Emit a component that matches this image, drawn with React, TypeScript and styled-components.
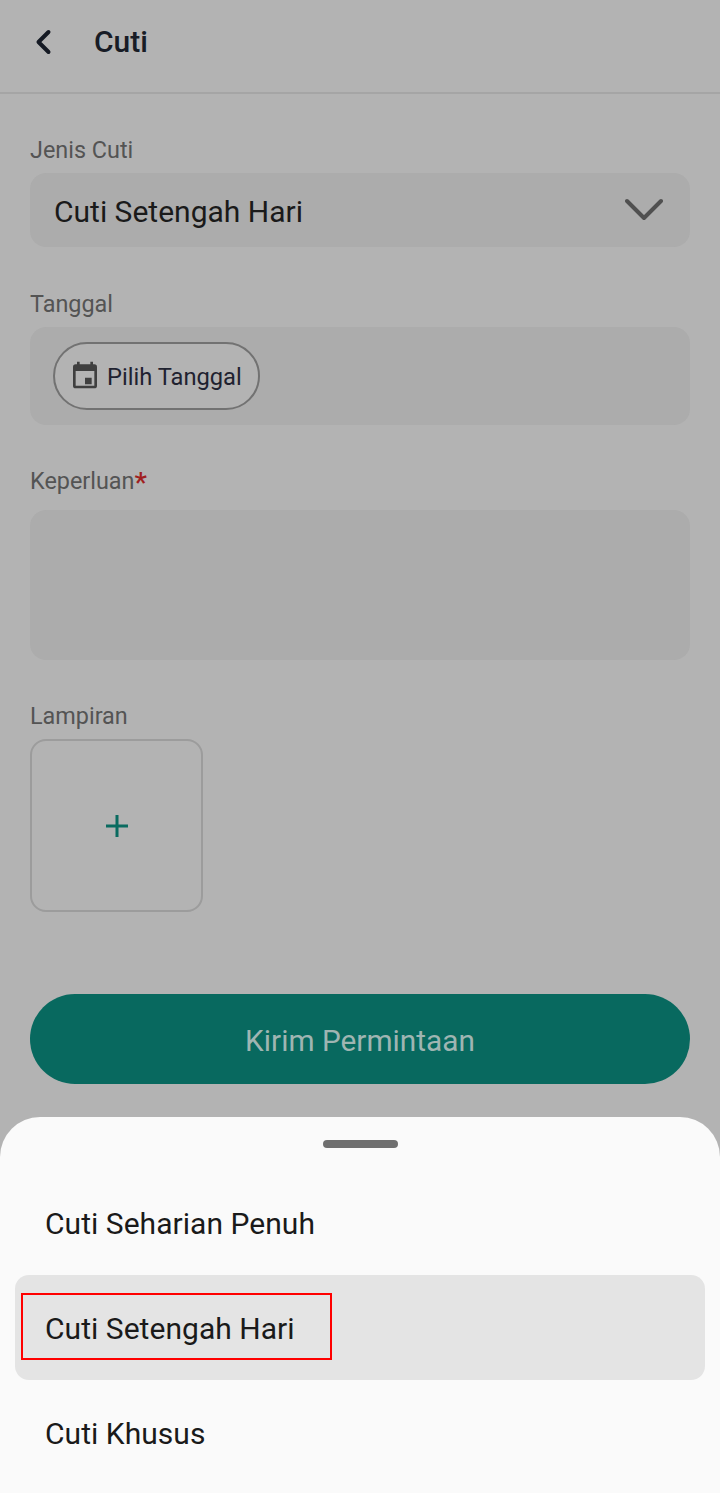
import React from "react";
import styled, { createGlobalStyle } from "styled-components";

const Global = createGlobalStyle`
  html, body { margin: 0; padding: 0; background: #b3b3b3; }
  * { box-sizing: border-box; }
  #root { width: 720px; height: 1493px; font-family: Roboto, "Liberation Sans", sans-serif; }
`;

const Page = styled.div`
  width: 720px;
  height: 1493px;
  display: flex;
  flex-direction: column;
  background: #b3b3b3;
  overflow: hidden;
`;

const Header = styled.header`
  height: 94px;
  flex: none;
  display: flex;
  align-items: center;
  gap: 30px;
  padding: 0 0 8px 30px;
  border-bottom: 2px solid #a5a5a5;
`;

const BackIcon = styled.svg`
  width: 34px;
  height: 34px;
  flex: none;
  color: #151a24;
`;

const Title = styled.h1`
  margin: 0;
  font-size: 30px;
  line-height: 36px;
  font-weight: 500;
  color: #181c26;
`;

const Form = styled.main`
  display: flex;
  flex-direction: column;
  padding: 40px 30px 0;
`;

const Group = styled.section<{ $after: number; $gap?: number }>`
  display: flex;
  flex-direction: column;
  gap: ${(p) => p.$gap ?? 7}px;
  margin-bottom: ${(p) => p.$after}px;
`;

const Label = styled.label`
  font-size: 23.4px;
  line-height: 32px;
  color: #545454;
`;

const Required = styled.span`
  color: #a02020;
  font-size: 28px;
  font-weight: 500;
  line-height: 0;
  position: relative;
  top: 3px;
`;

const SelectField = styled.div`
  height: 74px;
  border-radius: 16px;
  background: #acacac;
  display: flex;
  align-items: center;
  justify-content: space-between;
  padding: 0 27px 0 24px;
  font-size: 30px;
  color: #1a1a1a;
`;

const SelectText = styled.span`
  margin-top: 2px;
`;

const DateField = styled.div`
  height: 98px;
  border-radius: 16px;
  background: #acacac;
  display: flex;
  align-items: center;
  padding: 0 23px;
`;

const DateChip = styled.div`
  width: 207px;
  height: 68px;
  border-radius: 34px;
  border: 2px solid #727272;
  background: #b3b3b3;
  display: flex;
  align-items: center;
  gap: 6px;
  padding-left: 14px;
  font-size: 23.7px;
  color: #1f2230;
`;

const ChipText = styled.span`
  margin-top: 2px;
`;

const CalendarIcon = styled.svg`
  width: 32px;
  height: 32px;
  flex: none;
  margin-top: -2px;
  color: #3f3f3f;
`;

const NoteField = styled.div`
  height: 150px;
  border-radius: 16px;
  background: #acacac;
`;

const AddBox = styled.div`
  width: 173px;
  height: 173px;
  border-radius: 16px;
  border: 2px solid #9c9c9c;
  display: flex;
  align-items: center;
  justify-content: center;
`;

const PlusIcon = styled.svg`
  width: 24px;
  height: 24px;
  color: #0a6b60;
`;

const SubmitButton = styled.button`
  height: 90px;
  border: none;
  border-radius: 45px;
  background: #08695f;
  color: #9fb5b2;
  padding: 2px 0 0;
  font: 400 29.8px Roboto, "Liberation Sans", sans-serif;
`;

const Sheet = styled.aside`
  margin-top: auto;
  height: 376px;
  flex: none;
  background: #fafafa;
  border-radius: 40px 40px 0 0;
  padding: 23px 15px 0;
  display: flex;
  flex-direction: column;
`;

const Handle = styled.div`
  width: 75px;
  height: 8px;
  border-radius: 4px;
  background: #6f6f6f;
  align-self: center;
  margin: 0 0 22px 1px;
`;

const Option = styled.div<{ $selected?: boolean }>`
  height: 105px;
  flex: none;
  display: flex;
  align-items: center;
  padding: 2px 0 0 30px;
  border-radius: 14px;
  font-size: 30px;
  letter-spacing: 0.04px;
  color: #1a1a1a;
  position: relative;
  background: ${(p) => (p.$selected ? "#e4e4e4" : "transparent")};
`;

const Highlight = styled.div`
  position: absolute;
  left: 6px;
  top: 18px;
  width: 311px;
  height: 67px;
  border: 2px solid #ff0000;
`;

export default function App() {
  return (
    <Page>
      <Global />
      <Header>
        <BackIcon viewBox="0 0 34 34" fill="none" stroke="currentColor" strokeWidth="4" strokeLinecap="round" strokeLinejoin="round">
          <path d="M18.5 7 L8.5 17 L18.5 27" />
        </BackIcon>
        <Title>Cuti</Title>
      </Header>
      <Form>
        <Group $after={41}>
          <Label>Jenis Cuti</Label>
          <SelectField>
            <SelectText>Cuti Setengah Hari</SelectText>
            <svg width="38" height="24" viewBox="0 0 38 24" fill="none" stroke="#505050" strokeWidth="4" strokeLinecap="round" strokeLinejoin="round">
              <path d="M2 3 L19 20 L36 3" />
            </svg>
          </SelectField>
        </Group>
        <Group $after={40}>
          <Label>Tanggal</Label>
          <DateField>
            <DateChip>
              <CalendarIcon viewBox="0 0 24 24" fill="currentColor">
                <path d="M19 4h-1V2h-2v2H8V2H6v2H5a2 2 0 0 0-2 2v14a2 2 0 0 0 2 2h14a2 2 0 0 0 2-2V6a2 2 0 0 0-2-2zm0 16H5V9h14v11zM12 14h5v5h-5z" />
              </CalendarIcon>
              <ChipText>Pilih Tanggal</ChipText>
            </DateChip>
          </DateField>
        </Group>
        <Group $after={40} $gap={13}>
          <Label>
            Keperluan<Required>*</Required>
          </Label>
          <NoteField />
        </Group>
        <Group $after={82}>
          <Label>Lampiran</Label>
          <AddBox>
            <PlusIcon viewBox="0 0 24 24" fill="none" stroke="currentColor" strokeWidth="3">
              <path d="M12 1v22M1 12h22" />
            </PlusIcon>
          </AddBox>
        </Group>
        <SubmitButton>Kirim Permintaan</SubmitButton>
      </Form>
      <Sheet>
        <Handle />
        <Option>Cuti Seharian Penuh</Option>
        <Option $selected>
          Cuti Setengah Hari
          <Highlight />
        </Option>
        <Option>Cuti Khusus</Option>
      </Sheet>
    </Page>
  );
}
